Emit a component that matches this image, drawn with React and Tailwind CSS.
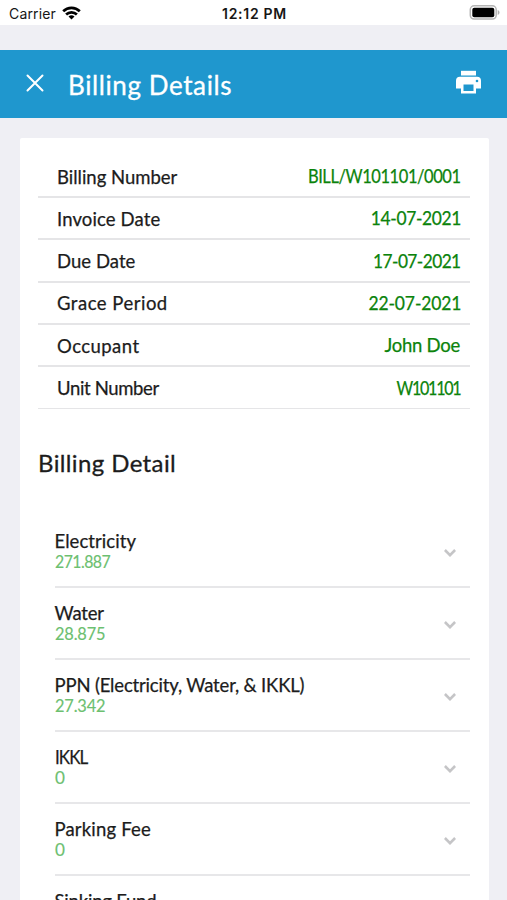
const summary = [
  { label: "Billing Number", value: "BILL/W101101/0001", track: "tracking-[-0.01px]", valueTrack: "tracking-[-0.45px] scale-x-[0.89]" },
  { label: "Invoice Date", value: "14-07-2021", track: "tracking-[0.13px]", valueTrack: "tracking-[-0.35px] scale-x-[0.94]" },
  { label: "Due Date", value: "17-07-2021", track: "tracking-[0.04px]", valueTrack: "tracking-[-0.6px] scale-x-[0.935]" },
  { label: "Grace Period", value: "22-07-2021", track: "tracking-[0.5px]", valueTrack: "tracking-[-0.12px] scale-x-[0.945]" },
  { label: "Occupant", value: "John Doe", track: "tracking-[0.45px]", valueTrack: "mr-[1px] tracking-[-0.25px]" },
  { label: "Unit Number", value: "W101101", track: "tracking-[-0.36px]", valueTrack: "mr-[0.8px] tracking-[-1.45px] scale-x-[0.87]" },
];

const charges = [
  { name: "Electricity", amount: "271.887", track: "tracking-[0.07px]", amountTrack: "tracking-[-0.6px] scale-x-[0.88]" },
  { name: "Water", amount: "28.875", track: "tracking-[-0.2px]", amountTrack: "tracking-[-0.2px] scale-x-[0.91]" },
  { name: "PPN (Electricity, Water, & IKKL)", amount: "27.342", track: "tracking-[-0.17px]", amountTrack: "tracking-[-0.2px] scale-x-[0.91]" },
  { name: "IKKL", amount: "0", track: "tracking-[-1px] scale-x-[0.92]", amountTrack: "scale-x-[0.95]" },
  { name: "Parking Fee", amount: "0", track: "tracking-[0.18px]", amountTrack: "scale-x-[0.95]" },
  { name: "Sinking Fund", amount: "0", track: "tracking-[-0.18px]", amountTrack: "scale-x-[0.95]" },
];

function StatusBar() {
  return (
    <div className="grid h-[25px] shrink-0 grid-cols-3 items-center bg-white pl-[9px] pr-[7px] font-['Inter',sans-serif] text-[14px] leading-none text-[#161616]">
      <div className="flex items-center gap-[6px] pt-[2px]">
        <span className="tracking-[0.15px]">Carrier</span>
        <svg className="-mt-[2px] h-[14px] w-[19px]" viewBox="0 0 19 14" fill="none" stroke="#000" strokeWidth="2.7">
          <path d="M1.2 5.2a11.8 11.8 0 0 1 16.6 0" />
          <path d="M4.1 8.5a7.8 7.8 0 0 1 10.8 0" />
          <path d="M9.5 13.6 6.5 10.6a4.3 4.3 0 0 1 6 0Z" fill="#000" stroke="none" />
        </svg>
      </div>
      <div className="whitespace-nowrap pt-[2px] text-center font-semibold tracking-[0.7px]">12:12 PM</div>
      <svg className="h-[15px] w-[31px] justify-self-end" viewBox="0 0 31 15">
        <rect x="1.3" y="0.8" width="25.9" height="13.2" rx="3.8" fill="#fff" stroke="#b5b5b5" strokeWidth="1.5" />
        <rect x="3.3" y="2.8" width="22" height="9.4" rx="2" fill="#000" />
        <path d="M28.7 5v5c1.1-.5 1.8-1.4 1.8-2.5S29.8 5.5 28.7 5Z" fill="#b0b0b0" />
      </svg>
    </div>
  );
}

function Header() {
  return (
    <header className="mt-[25px] flex h-[68px] shrink-0 items-center bg-[#1f97ce] pl-[26px] pr-[25px] text-white">
      <svg className="-mt-[3px] h-[18px] w-[18px]" viewBox="0 0 18 18" stroke="#fff" strokeWidth="2" strokeLinecap="round">
        <path d="M1.5 1.5 16.5 16.5M16.5 1.5 1.5 16.5" />
      </svg>
      <h1 className="ml-[24px] flex-1 pt-px text-[26px] leading-8 tracking-[0.6px] [-webkit-text-stroke:0.3px]">Billing Details</h1>
      <svg className="-mt-[4px] h-[24px] w-[27px]" viewBox="0 0 27 24">
        <path d="M6 0.8H21V5.5H6Z" fill="#fff" />
        <path
          d="M5 6.8H22A4 4 0 0 1 26 10.8V18.5H21V23.5H6V18.5H1V10.8A4 4 0 0 1 5 6.8ZM8.5 14.5V21H18.5V14.5Z"
          fill="#fff"
          fillRule="evenodd"
        />
        <circle cx="22" cy="11" r="1.3" fill="#1f97ce" />
      </svg>
    </header>
  );
}

function SummaryRow({ row }) {
  return (
    <div className="flex h-[42.25px] items-center justify-between border-b-2 border-[#e5e5e7] pl-[19px] pr-[9px] pt-px text-[18.5px] leading-6 last:border-b [-webkit-text-stroke:0.25px]">
      <span className={`text-[#1c1c1c] ${row.track}`}>{row.label}</span>
      <span className={`origin-right pb-px text-[#0b830b] ${row.valueTrack}`}>{row.value}</span>
    </div>
  );
}

function ChargeRow({ item }) {
  return (
    <div className="flex h-[72.1px] shrink-0 items-center justify-between border-b-2 border-[#e7e7e9] pr-[14px]">
      <div className="flex flex-col items-start whitespace-nowrap leading-[21px]">
        <span className={`origin-left text-[18.5px] text-[#1c1c1c] [-webkit-text-stroke:0.25px] ${item.track}`}>{item.name}</span>
        <span className={`-mt-px origin-left text-[18px] text-[#6cc070] [-webkit-text-stroke:0.15px] ${item.amountTrack}`}>{item.amount}</span>
      </div>
      <svg className="mt-[4px] h-[8px] w-[12px]" viewBox="0 0 12 8" fill="none" stroke="#c5c5c7" strokeWidth="2.6">
        <path d="M0.9 1 6 6.1 11.1 1" />
      </svg>
    </div>
  );
}

export default function App() {
  return (
    <div className="flex h-[900px] w-full flex-col overflow-hidden bg-[#efeff4] font-['Lato',sans-serif]">
      <StatusBar />
      <Header />
      <main className="ml-[20px] mr-[18px] mt-[20px] min-h-0 flex-1 overflow-hidden rounded-t-[2px] bg-white pl-[18px] pr-[19px] pt-[17.9px]">
        <div>
          {summary.map((row) => (
            <SummaryRow key={row.label} row={row} />
          ))}
        </div>
        <h2 className="mt-[37.6px] text-[24px] leading-8 tracking-[0.38px] text-[#1c1c1c] [-webkit-text-stroke:0.3px]">Billing Detail</h2>
        <div className="mt-[37px] pl-[16.5px]">
          {charges.map((item) => (
            <ChargeRow key={item.name} item={item} />
          ))}
        </div>
      </main>
    </div>
  );
}
